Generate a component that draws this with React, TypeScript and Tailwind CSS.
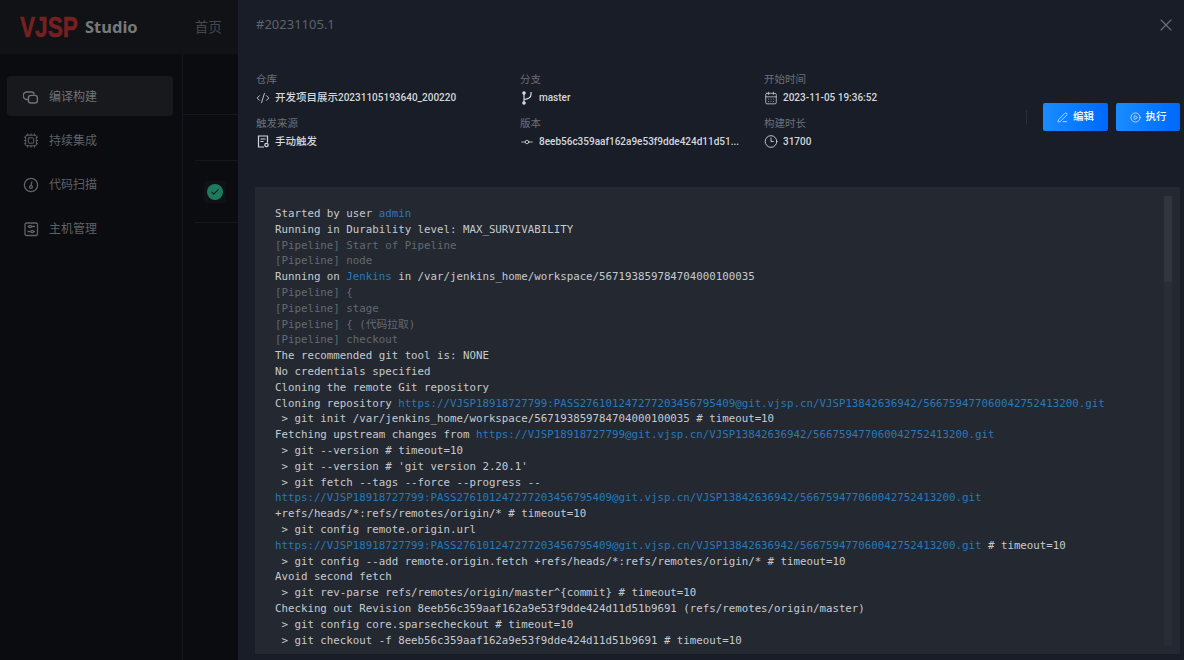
import { CalendarDays, Check, CirclePlay, Clock3, CodeXml, Cpu, GitCommitHorizontal, PenLine, X } from 'lucide-react'

const SANS = { fontFamily: '"Noto Sans", "Noto Sans CJK SC", sans-serif' }

type Seg = { t: string; c?: 'link' | 'dim' }

const L = 'https://VJSP18918727799:PASS276101247277203456795409@git.vjsp.cn/VJSP13842636942/566759477060042752413200.git'
const L2 = 'https://VJSP18918727799@git.vjsp.cn/VJSP13842636942/566759477060042752413200.git'

const LOG: Seg[][] = [
  [{ t: 'Started by user ' }, { t: 'admin', c: 'link' }],
  [{ t: 'Running in Durability level: MAX_SURVIVABILITY' }],
  [{ t: '[Pipeline] Start of Pipeline', c: 'dim' }],
  [{ t: '[Pipeline] node', c: 'dim' }],
  [{ t: 'Running on ' }, { t: 'Jenkins', c: 'link' }, { t: ' in /var/jenkins_home/workspace/567193859784704000100035' }],
  [{ t: '[Pipeline] {', c: 'dim' }],
  [{ t: '[Pipeline] stage', c: 'dim' }],
  [{ t: '[Pipeline] { (代码拉取)', c: 'dim' }],
  [{ t: '[Pipeline] checkout', c: 'dim' }],
  [{ t: 'The recommended git tool is: NONE' }],
  [{ t: 'No credentials specified' }],
  [{ t: 'Cloning the remote Git repository' }],
  [{ t: 'Cloning repository ' }, { t: L, c: 'link' }],
  [{ t: ' > git init /var/jenkins_home/workspace/567193859784704000100035 # timeout=10' }],
  [{ t: 'Fetching upstream changes from ' }, { t: L2, c: 'link' }],
  [{ t: ' > git --version # timeout=10' }],
  [{ t: " > git --version # 'git version 2.20.1'" }],
  [{ t: ' > git fetch --tags --force --progress --' }],
  [{ t: L, c: 'link' }],
  [{ t: '+refs/heads/*:refs/remotes/origin/* # timeout=10' }],
  [{ t: ' > git config remote.origin.url' }],
  [{ t: L, c: 'link' }, { t: ' # timeout=10' }],
  [{ t: ' > git config --add remote.origin.fetch +refs/heads/*:refs/remotes/origin/* # timeout=10' }],
  [{ t: 'Avoid second fetch' }],
  [{ t: ' > git rev-parse refs/remotes/origin/master^{commit} # timeout=10' }],
  [{ t: 'Checking out Revision 8eeb56c359aaf162a9e53f9dde424d11d51b9691 (refs/remotes/origin/master)' }],
  [{ t: ' > git config core.sparsecheckout # timeout=10' }],
  [{ t: ' > git checkout -f 8eeb56c359aaf162a9e53f9dde424d11d51b9691 # timeout=10' }],
]

function BuildIcon() {
  return (
    <svg width="16" height="16" viewBox="0 0 16 16" fill="none" stroke="currentColor" strokeWidth="1.4">
      <path d="M6 10.5H4a2.6 2.6 0 0 1 0-7.5h4.5a2.6 2.6 0 0 1 2.6 2.6" />
      <rect x="5.4" y="6.4" width="9" height="7.6" rx="2.6" />
    </svg>
  )
}

function ScanIcon() {
  return (
    <svg width="16" height="16" viewBox="0 0 16 16" fill="none" stroke="currentColor" strokeWidth="1.3">
      <circle cx="8" cy="8" r="6.6" />
      <path d="M8 8.5l1-4" />
      <circle cx="8" cy="10" r="1.4" />
    </svg>
  )
}

function HostIcon() {
  return (
    <svg width="16" height="16" viewBox="0 0 16 16" fill="none" stroke="currentColor" strokeWidth="1.3">
      <rect x="2" y="2" width="12.5" height="12.5" rx="1.4" />
      <path d="M4.5 5.5h1.5M8.5 5.5h3.5M4.5 10.5h3M10.5 10.5h1.5" />
      <circle cx="7.2" cy="5.5" r="1.2" />
      <circle cx="9.2" cy="10.5" r="1.2" />
    </svg>
  )
}

function ManualIcon() {
  return (
    <svg width="13" height="13" viewBox="0 0 13 13" fill="none" stroke="currentColor" strokeWidth="1.2" className="shrink-0">
      <path d="M7 12H1.5V1h9v6.5" />
      <path d="M3.5 4h5M3.5 6.5h3" />
      <circle cx="9.5" cy="10" r="1.7" />
    </svg>
  )
}

function BranchIcon() {
  return (
    <svg width="12" height="14" viewBox="0 0 12 14" fill="none" stroke="currentColor" strokeWidth="1.2" className="shrink-0">
      <path d="M3 3v8" />
      <path d="M10 1v2.5C10 6.5 7 8 3 8.5" />
      <circle cx="3" cy="2" r="1.2" fill="currentColor" />
      <circle cx="3" cy="12" r="1.2" fill="currentColor" />
    </svg>
  )
}

const NAV = [
  { label: '编译构建', icon: <BuildIcon />, active: true },
  { label: '持续集成', icon: <Cpu size={17} strokeWidth={1.5} /> },
  { label: '代码扫描', icon: <ScanIcon /> },
  { label: '主机管理', icon: <HostIcon /> },
]

function Meta({ label, icon, children }: { label: string; icon: React.ReactNode; children: React.ReactNode }) {
  return (
    <div className="flex flex-col gap-[2px]">
      <div className="h-4 text-[10.5px] leading-4 text-[#6b7079]">{label}</div>
      <div className="flex h-4 items-center gap-[5px] pt-px text-[10px] font-medium leading-4 text-[#d4d7dc]" style={{ fontFamily: 'Roboto, "Noto Sans CJK SC", sans-serif' }}>
        <span className="flex w-[14px] shrink-0 justify-center">{icon}</span>
        <span className="whitespace-nowrap">{children}</span>
      </div>
    </div>
  )
}

export default function App() {
  return (
    <div className="relative flex h-[660px] w-[1184px] flex-col overflow-hidden bg-[#0a0c10]" style={SANS}>
      <header className="flex h-[54px] shrink-0 items-center bg-[#101215] pl-5">
        <span className="w-[65px] origin-left scale-x-[0.78] text-[29px] font-bold leading-none text-[#762021] [-webkit-text-stroke:0.6px_#762021]" style={{ fontFamily: '"Liberation Sans", sans-serif' }}>
          VJSP
        </span>
        <span className="text-[16.5px] font-bold text-[#77797d]">Studio</span>
        <span className="ml-[57px] text-[13.5px] text-[#46484c]">首页</span>
      </header>

      <div className="flex flex-1">
        <nav className="flex w-[183px] shrink-0 flex-col gap-1 border-r border-[#14171b] px-[7px] pt-[22px]">
          {NAV.map((item) => (
            <div
              key={item.label}
              className={`flex h-10 w-[166px] items-center gap-[10px] rounded-[4px] pl-[16px] pt-px text-[12px] ${item.active ? 'bg-[#17191d] text-[#707377]' : 'text-[#5f6266]'}`}
            >
              <span className="flex w-4 shrink-0 justify-center">{item.icon}</span>
              {item.label}
            </div>
          ))}
        </nav>
        <div className="flex-1">
          <div className="h-[61px] border-b border-[#14171b]" />
          <div className="ml-3 h-[46px] border-b border-[#14171b]" />
          <div className="ml-3 flex h-[62px] items-center border-b border-[#14171b] pl-[9px]">
            <span className="flex h-[22px] w-[22px] items-center justify-center rounded-[3px] bg-[#0e1216]">
              <span className="flex h-4 w-4 items-center justify-center rounded-full bg-[#1e7a5c] text-[#0b0d11]">
                <Check size={10} strokeWidth={2.5} />
              </span>
            </span>
          </div>
        </div>
      </div>

      <aside className="absolute inset-y-0 left-[238px] right-0 flex flex-col bg-[#181d27]">
        <div className="flex h-[50px] shrink-0 items-center justify-between pl-[18px] pr-2">
          <span className="text-[13px] text-[#5e636b]">#20231105.1</span>
          <X size={20} strokeWidth={1.3} className="text-[#6b7079]" />
        </div>

        <div className="flex h-[137px] shrink-0 items-start pl-[18px] pr-[4px] pt-[21px]">
          <div className="grid grid-cols-[264px_244px_262px] gap-y-[10px]">
            <Meta label="仓库" icon={<CodeXml size={14} strokeWidth={1.5} />}>
              <span className="text-[10.5px]">开发项目展示</span>20231105193640_200220
            </Meta>
            <Meta label="分支" icon={<BranchIcon />}>master</Meta>
            <Meta label="开始时间" icon={<CalendarDays size={16} strokeWidth={1.3} />}>2023-11-05 19:36:52</Meta>
            <Meta label="触发来源" icon={<ManualIcon />}>
              <span className="text-[10.5px]">手动触发</span>
            </Meta>
            <Meta label="版本" icon={<GitCommitHorizontal size={14} strokeWidth={1.4} />}>8eeb56c359aaf162a9e53f9dde424d11d51...</Meta>
            <Meta label="构建时长" icon={<Clock3 size={15} strokeWidth={1.5} />}>31700</Meta>
          </div>
          <div className="mt-[32px] flex items-center">
            <div className="mr-4 h-[14px] w-px bg-[#2a2f38]" />
            <button className="flex h-7 w-[65px] items-center justify-center gap-[5px] rounded-[2px] bg-gradient-to-r from-[#1a8cff] to-[#0068ff] text-[10.5px] font-medium text-white">
              <PenLine size={11} strokeWidth={1.4} />
              编辑
            </button>
            <button className="ml-2 flex h-7 w-[64px] items-center justify-center gap-[5px] rounded-[2px] bg-gradient-to-r from-[#1a8cff] to-[#0068ff] text-[10.5px] font-medium text-white">
              <CirclePlay size={11} strokeWidth={1.4} />
              执行
            </button>
          </div>
        </div>

        <div className="relative ml-[17px] mr-[4px] h-[467px] overflow-hidden bg-[#232831] pl-[20px] pt-[19px]">
          <pre className="text-[10.78px] leading-[15.8px] text-[#c6cacf]" style={{ fontFamily: '"DejaVu Sans Mono", "Noto Sans CJK SC", monospace' }}>
            {LOG.map((line, i) => (
              <div key={i}>
                {line.map((seg, j) => (
                  <span key={j} className={seg.c === 'link' ? 'text-[#2a79b8]' : seg.c === 'dim' ? 'text-[#646970]' : undefined}>
                    {seg.t}
                  </span>
                ))}
              </div>
            ))}
          </pre>
          <div className="absolute bottom-[9px] right-2 top-[9px] w-2 bg-[#282d36]">
            <div className="h-[86px] bg-[#30353e]" />
          </div>
        </div>
      </aside>
    </div>
  )
}
